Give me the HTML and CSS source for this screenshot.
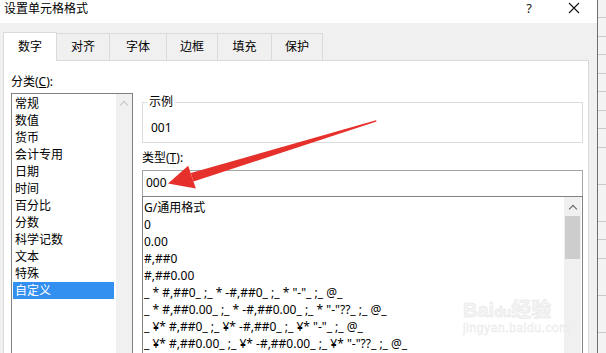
FILE: index.html
```html
<!DOCTYPE html>
<html lang="zh-CN">
<head>
    <meta charset="UTF-8">
    <title>设置单元格格式</title>
    <link rel="stylesheet" href="styles.css">
</head>
<body>
    <div class="screen">
        <div class="dialog">
            <div class="titlebar">
                <span class="title">设置单元格格式</span>
                <span class="help">?</span>
                <svg class="close" width="12" height="12" viewBox="0 0 12 12">
                    <path d="M1 1 L11 11 M11 1 L1 11" stroke="#111" stroke-width="1.1" fill="none"/>
                </svg>
            </div>
            <div class="dialog-body">
                <div class="tabs">
                    <div class="tab active" style="width: 54px">数字</div>
                    <div class="tab" style="width: 53px">对齐</div>
                    <div class="tab" style="width: 57px">字体</div>
                    <div class="tab" style="width: 51px">边框</div>
                    <div class="tab" style="width: 54px">填充</div>
                    <div class="tab" style="width: 51px">保护</div>
                </div>
                <div class="panel">
                    <div class="category">
                        <div class="label">分类(<u>C</u>):</div>
                        <div class="listbox cat-list">
                            <ul class="items">
                                <li>常规</li>
                                <li>数值</li>
                                <li>货币</li>
                                <li>会计专用</li>
                                <li>日期</li>
                                <li>时间</li>
                                <li>百分比</li>
                                <li>分数</li>
                                <li>科学记数</li>
                                <li>文本</li>
                                <li>特殊</li>
                                <li class="selected">自定义</li>
                            </ul>
                            <div class="scrollbar disabled">
                                <span class="chevron"></span>
                            </div>
                        </div>
                    </div>
                    <div class="detail">
                        <fieldset class="sample">
                            <legend>示例</legend>
                            <div class="sample-value">001</div>
                        </fieldset>
                        <div class="label type-label">类型(<u>T</u>):</div>
                        <div class="type-input">000</div>
                        <div class="listbox fmt-list">
                            <ul class="items">
                                <li>G/通用格式</li>
                                <li>0</li>
                                <li>0.00</li>
                                <li>#,##0</li>
                                <li>#,##0.00</li>
                                <li>_ * #,##0_ ;_ * -#,##0_ ;_ * "-"_ ;_ @_</li>
                                <li>_ * #,##0.00_ ;_ * -#,##0.00_ ;_ * "-"??_ ;_ @_</li>
                                <li>_ ¥* #,##0_ ;_ ¥* -#,##0_ ;_ ¥* "-"_ ;_ @_</li>
                                <li>_ ¥* #,##0.00_ ;_ ¥* -#,##0.00_ ;_ ¥* "-"??_ ;_ @_</li>
                            </ul>
                            <div class="scrollbar">
                                <span class="chevron"></span>
                                <div class="thumb"></div>
                            </div>
                        </div>
                    </div>
                </div>
            </div>
        </div>
        <div class="sheet-edge"></div>

        <!-- annotation arrow drawn over the dialog -->
        <svg class="arrow" width="606" height="353" viewBox="0 0 606 353">
            <polygon points="376,120.3 376.6,121.6 193.5,181.5 190.8,173" fill="#e5302c"/>
            <polygon points="168,183.5 188.2,165.8 195.8,188.6" fill="#e5302c"/>
        </svg>

        <div class="watermark">
            <div class="wm-logo">Bai<span class="wm-du">du</span>经验</div>
            <div class="wm-url">jingyan.baidu.com</div>
        </div>
    </div>
</body>
</html>
```

FILE: styles.css
```css
* {
    box-sizing: border-box;
}

body {
    margin: 0;
    font-family: "Noto Sans", "Noto Sans CJK SC", sans-serif;
    font-size: 12px;
    color: #000;
    background: #fff;
}

.screen {
    position: relative;
    display: flex;
    width: 606px;
    height: 353px;
    overflow: hidden;
}

.dialog {
    display: flex;
    flex-direction: column;
    width: 597px;
    height: 353px;
}

/* title bar */
.titlebar {
    display: flex;
    align-items: flex-start;
    height: 23px;
    padding-left: 4px;
    background: #fff;
}

.title {
    flex: 1;
    line-height: 18px;
}

.help {
    margin-right: 36px;
    line-height: 16px;
    font-size: 13px;
    color: #222;
}

.close {
    margin: 2px 17px 0 0;
}

/* body */
.dialog-body {
    display: flex;
    flex-direction: column;
    flex: 1;
    padding: 9px 8px 0 3px;
    background: #f0f0f0;
}

.tabs {
    display: flex;
    align-items: flex-end;
    height: 28px;
}

.tab {
    height: 27px;
    line-height: 26px;
    text-align: center;
    border-top: 1px solid #dadada;
    border-right: 1px solid #dadada;
    background: #f0f0f0;
}

.tab.active {
    height: 29px;
    margin-bottom: -1px;
    line-height: 28px;
    border-left: 1px solid #dadada;
    background: #fff;
    position: relative;
}

.panel {
    display: flex;
    gap: 9px;
    flex: 1;
    padding: 13px 5px 0 7px;
    background: #fff;
    border: 1px solid #d9d9d9;
    border-bottom: none;
}

.label {
    line-height: 16px;
}

.label u {
    text-decoration-thickness: 1px;
    text-underline-offset: 1px;
}

.category {
    display: flex;
    flex-direction: column;
    width: 122px;
}

.category .label {
    margin-bottom: 3px;
}

.listbox {
    display: flex;
    flex: 1;
    border: 1px solid #828282;
    border-bottom: none;
}

.items {
    flex: 1;
    margin: 0;
    padding: 0;
    list-style: none;
}

.items li {
    height: 17px;
    line-height: 17px;
    white-space: pre;
}

.cat-list .items {
    padding: 1px 2px 0 1px;
}

.cat-list .items li {
    padding-left: 2px;
}

.items li.selected {
    background: #3390f0;
    color: #fff;
}

.scrollbar {
    display: flex;
    flex-direction: column;
    align-items: center;
    width: 16px;
    background: #f0f0f0;
}

.chevron {
    width: 6px;
    height: 6px;
    margin-top: 8px;
    border-left: 1.5px solid #606060;
    border-top: 1.5px solid #606060;
    transform: rotate(45deg);
}

.scrollbar.disabled .chevron {
    border-color: #c4c4c4;
}

.thumb {
    width: 15px;
    height: 43px;
    margin-top: 4px;
    background: #cdcdcd;
}

/* right column */
.detail {
    display: flex;
    flex-direction: column;
    flex: 1;
}

.sample {
    margin: 20px 0 0;
    padding: 0 4px 6px;
    border: 1px solid #dcdcdc;
}

.sample legend {
    padding: 0 2px;
    line-height: 16px;
}

.sample-value {
    padding: 10px 0 0 4px;
    line-height: 16px;
}

.type-label {
    margin: 7px 0 4px;
}

.type-input {
    height: 26px;
    padding-left: 3px;
    line-height: 24px;
    border: 1px solid #a5a5a5;
    border-bottom: none;
}

.fmt-list .items {
    padding: 2px 0 0 1px;
}

.fmt-list .scrollbar {
    width: 17px;
    margin-right: 1px;
}

.fmt-list .chevron {
    margin-top: 9px;
}

/* spreadsheet behind the dialog */
.sheet-edge {
    width: 9px;
    border-left: 1px solid #707070;
    background: repeating-linear-gradient(to bottom, #f3f3f3 0, #f3f3f3 17.5px, #c9c9c9 17.5px, #c9c9c9 18.5px);
}

.arrow {
    position: absolute;
    left: 0;
    top: 0;
    pointer-events: none;
}

.watermark {
    position: absolute;
    left: 463px;
    top: 300px;
    color: #f4f4f4;
    line-height: 1;
}

.wm-logo {
    font-family: "Liberation Sans", "Noto Sans CJK SC", sans-serif;
    font-size: 20px;
    font-weight: bold;
    -webkit-text-stroke: 0.5px #e6e6e6;
}

.wm-du {
    font-size: 14px;
}

.wm-url {
    margin-top: 2px;
    font-family: "Liberation Sans", sans-serif;
    font-size: 12px;
    letter-spacing: 0.6px;
    -webkit-text-stroke: 0.3px #e6e6e6;
}
```
